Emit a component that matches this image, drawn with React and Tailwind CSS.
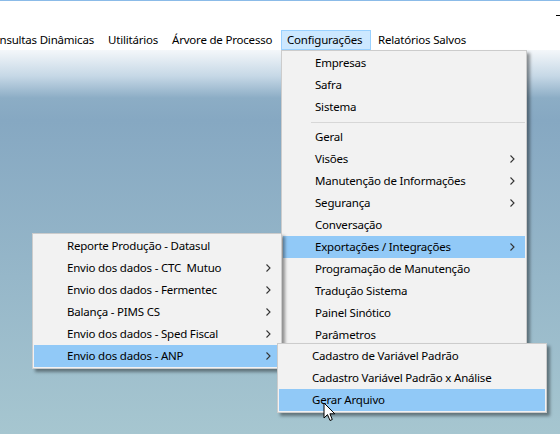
import React from 'react';

const Chevron = () => (
  <svg width="5" height="8" viewBox="0 0 5 8" className="shrink-0">
    <path d="M0.5 0.5 L4 4 L0.5 7.5" fill="none" stroke="#333" strokeWidth="1.1" />
  </svg>
);

const MenuItem = ({ label, sub, active, textPad = 'pl-[32px]', arrowPad = 'pr-[11px]' }) => (
  <div
    className={`h-[22px] flex items-center justify-between ${textPad} ${arrowPad} ${active ? 'bg-[#91c9f7]' : ''}`}
  >
    <span className="whitespace-pre">{label}</span>
    {sub && <Chevron />}
  </div>
);

const Separator = () => (
  <div className="h-[8px] flex items-center pl-[28px]">
    <div className="h-px w-full bg-[#d7d7d7]" />
  </div>
);

const Cursor = () => (
  <svg width="13" height="20" viewBox="0 0 13 20" className="absolute left-[323px] top-[402px]">
    <path
      d="M1 1 L1 16 L4.5 12.6 L7 18.5 L9.3 17.5 L6.9 11.8 L11.8 11.8 Z"
      fill="#fff"
      stroke="#000"
      strokeWidth="1"
      strokeLinejoin="miter"
    />
  </svg>
);

export default function App() {
  const config = [
    { label: 'Empresas' },
    { label: 'Safra' },
    { label: 'Sistema' },
    { sep: true },
    { label: 'Geral' },
    { label: 'Visões', sub: true },
    { label: 'Manutenção de Informações', sub: true },
    { label: 'Segurança', sub: true },
    { label: 'Conversação' },
    { label: 'Exportações / Integrações', sub: true, active: true },
    { label: 'Programação de Manutenção' },
    { label: 'Tradução Sistema' },
    { label: 'Painel Sinótico' },
    { label: 'Parâmetros' },
  ];

  const exportacoes = [
    { label: 'Reporte Produção - Datasul' },
    { label: 'Envio dos dados - CTC  Mutuo', sub: true },
    { label: 'Envio dos dados - Fermentec', sub: true },
    { label: 'Balança - PIMS CS', sub: true },
    { label: 'Envio dos dados - Sped Fiscal', sub: true },
    { label: 'Envio dos dados - ANP', sub: true, active: true },
  ];

  const anp = [
    { label: 'Cadastro de Variável Padrão' },
    { label: 'Cadastro Variável Padrão x Análise' },
    { label: 'Gerar Arquivo', active: true },
  ];

  return (
    <div className="relative w-[560px] h-[434px] overflow-hidden flex flex-col font-['Noto_Sans',sans-serif] text-[11.5px] tracking-[-0.2px] text-black">
      <div className="h-[50px] bg-white border-t border-[#8bbbe8] flex flex-col">
        <div className="h-[29px] flex justify-end pt-[14px]">
          <div className="h-px w-[4px] bg-black" />
        </div>
        <div className="h-[20px] flex items-stretch">
          <div className="w-[101px] flex items-center justify-end pr-[7px] overflow-hidden whitespace-nowrap">
            Consultas Dinâmicas
          </div>
          <div className="w-[64px] flex items-center pl-[7px] whitespace-nowrap">Utilitários</div>
          <div className="w-[116px] flex items-center pl-[7px] whitespace-nowrap">Árvore de Processo</div>
          <div className="w-[90px] flex items-center pl-[5px] whitespace-nowrap bg-[#cce8ff] border border-[#99d1ff]">
            Configurações
          </div>
          <div className="w-[101px] flex items-center pl-[7px] whitespace-nowrap">Relatórios Salvos</div>
        </div>
      </div>

      <div className="flex-1 bg-[linear-gradient(to_bottom,#f4f7fa_0px,#c6d8e6_26px,#8cadc5_48px,#86a8c2_70px,#a6c6d0_384px)]" />

      {/* Configurações dropdown */}
      <div className="absolute left-[281px] top-[50px] w-[246px] bg-[#f2f2f2] border border-[#cccccc] p-[1px] shadow-[3px_3px_3px_rgba(0,0,0,0.4)]">
        {config.map((it, i) =>
          it.sep ? (
            <Separator key={i} />
          ) : (
            <MenuItem key={i} label={it.label} sub={it.sub} active={it.active} arrowPad="pr-[10px]" />
          )
        )}
      </div>

      {/* Exportações / Integrações submenu */}
      <div className="absolute left-[32px] top-[233px] w-[250px] bg-[#f2f2f2] border border-[#cccccc] p-[1px] shadow-[3px_3px_3px_rgba(0,0,0,0.4)]">
        {exportacoes.map((it, i) => (
          <MenuItem key={i} label={it.label} sub={it.sub} active={it.active} textPad="pl-[33px]" arrowPad="pr-[9px]" />
        ))}
      </div>

      {/* Envio dos dados - ANP submenu */}
      <div className="absolute left-[277px] top-[343px] w-[270px] bg-[#f2f2f2] border border-[#cccccc] p-[1px] shadow-[3px_3px_3px_rgba(0,0,0,0.4)]">
        {anp.map((it, i) => (
          <MenuItem key={i} label={it.label} active={it.active} textPad="pl-[33px]" />
        ))}
      </div>

      <Cursor />
    </div>
  );
}
